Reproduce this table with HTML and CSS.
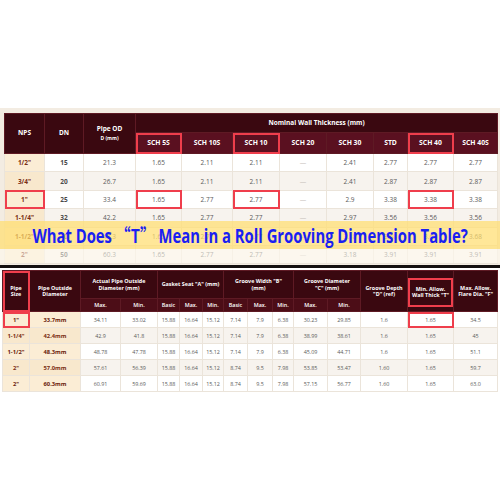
FILE: index.html
```html
<!DOCTYPE html>
<html lang="en">
<head>
  <meta charset="UTF-8">
  <meta name="viewport" content="width=device-width, initial-scale=1.0">
  <title>Roll Grooving Dimension Table</title>
  <link rel="stylesheet" href="styles.css">
</head>
<body>
  <div class="page">
    <section class="sheet-top">
      <table class="wall-table">
        <colgroup>
          <col style="width:40px"><col style="width:39px"><col style="width:52px"><col style="width:46px">
          <col style="width:51px"><col style="width:47px"><col style="width:47px"><col style="width:47px">
          <col style="width:34px"><col style="width:46px"><col style="width:44px">
        </colgroup>
        <thead>
          <tr class="head-main">
            <th rowspan="2">NPS</th>
            <th rowspan="2">DN</th>
            <th rowspan="2">Pipe OD<span class="unit">D (mm)</span></th>
            <th colspan="8">Nominal Wall Thickness (mm)</th>
          </tr>
          <tr class="head-sub">
            <th class="mark">SCH 5S</th>
            <th>SCH 10S</th>
            <th class="mark">SCH 10</th>
            <th>SCH 20</th>
            <th>SCH 30</th>
            <th>STD</th>
            <th class="mark">SCH 40</th>
            <th>SCH 40S</th>
          </tr>
        </thead>
        <tbody>
          <tr><td class="nps">1/2"</td><td class="dn">15</td><td>21.3</td><td>1.65</td><td>2.11</td><td>2.11</td><td class="dash">—</td><td>2.41</td><td>2.77</td><td>2.77</td><td>2.77</td></tr>
          <tr><td class="nps">3/4"</td><td class="dn">20</td><td>26.7</td><td>1.65</td><td>2.11</td><td>2.11</td><td class="dash">—</td><td>2.41</td><td>2.87</td><td>2.87</td><td>2.87</td></tr>
          <tr><td class="nps mark">1"</td><td class="dn">25</td><td>33.4</td><td class="mark">1.65</td><td>2.77</td><td class="mark">2.77</td><td class="dash">—</td><td>2.9</td><td>3.38</td><td class="mark">3.38</td><td>3.38</td></tr>
          <tr><td class="nps">1-1/4"</td><td class="dn">32</td><td>42.2</td><td>1.65</td><td>2.77</td><td>2.77</td><td class="dash">—</td><td>2.97</td><td>3.56</td><td>3.56</td><td>3.56</td></tr>
          <tr><td class="nps">1-1/2"</td><td class="dn">40</td><td>48.3</td><td>1.65</td><td>2.77</td><td>2.77</td><td class="dash">—</td><td>3.18</td><td>3.68</td><td>3.68</td><td>3.68</td></tr>
          <tr><td class="nps">2"</td><td class="dn">50</td><td>60.3</td><td>1.65</td><td>2.77</td><td>2.77</td><td class="dash">—</td><td>3.18</td><td>3.91</td><td>3.91</td><td>3.91</td></tr>
        </tbody>
      </table>
    </section>

    <div class="rule"></div>

    <section class="sheet-bottom">
      <table class="groove-table">
        <colgroup>
          <col style="width:27px"><col style="width:51px"><col style="width:40px"><col style="width:37px">
          <col style="width:22px"><col style="width:23px"><col style="width:21px"><col style="width:24px">
          <col style="width:25px"><col style="width:21px"><col style="width:34px"><col style="width:33px">
          <col style="width:47px"><col style="width:46px"><col style="width:44px">
        </colgroup>
        <thead>
          <tr class="head-main">
            <th rowspan="2" class="mark">Pipe<br>Size</th>
            <th rowspan="2">Pipe Outside<br>Diameter</th>
            <th colspan="2">Actual Pipe Outside<br>Diameter (mm)</th>
            <th colspan="3">Gasket Seat "A" (mm)</th>
            <th colspan="3">Groove Width "B"<br>(mm)</th>
            <th colspan="2">Groove Diameter<br>"C" (mm)</th>
            <th rowspan="2">Groove Depth<br>"D" (ref)</th>
            <th rowspan="2" class="tall"><span class="mark-box">Min. Allow.<br>Wall Thick "T"</span></th>
            <th rowspan="2">Max. Allow.<br>Flare Dia. "F"</th>
          </tr>
          <tr class="head-sub">
            <th>Max.</th><th>Min.</th>
            <th>Basic</th><th>Max.</th><th>Min.</th>
            <th>Basic</th><th>Max.</th><th>Min.</th>
            <th>Max.</th><th>Min.</th>
          </tr>
        </thead>
        <tbody>
          <tr><td class="nps mark">1"</td><td class="nps">33.7mm</td><td>34.11</td><td>33.02</td><td>15.88</td><td>16.64</td><td>15.12</td><td>7.14</td><td>7.9</td><td>6.38</td><td>30.23</td><td>29.85</td><td>1.6</td><td class="mark">1.65</td><td>34.5</td></tr>
          <tr><td class="nps">1-1/4"</td><td class="nps">42.4mm</td><td>42.9</td><td>41.8</td><td>15.88</td><td>16.64</td><td>15.12</td><td>7.14</td><td>7.9</td><td>6.38</td><td>38.99</td><td>38.61</td><td>1.6</td><td>1.65</td><td>45</td></tr>
          <tr><td class="nps">1-1/2"</td><td class="nps">48.3mm</td><td>48.78</td><td>47.78</td><td>15.88</td><td>16.64</td><td>15.12</td><td>7.14</td><td>7.9</td><td>6.38</td><td>45.09</td><td>44.71</td><td>1.6</td><td>1.65</td><td>51.1</td></tr>
          <tr><td class="nps">2"</td><td class="nps">57.0mm</td><td>57.61</td><td>56.39</td><td>15.88</td><td>16.64</td><td>15.12</td><td>8.74</td><td>9.5</td><td>7.98</td><td>53.85</td><td>53.47</td><td>1.60</td><td>1.65</td><td>59.7</td></tr>
          <tr><td class="nps">2"</td><td class="nps">60.3mm</td><td>60.91</td><td>59.69</td><td>15.88</td><td>16.64</td><td>15.12</td><td>8.74</td><td>9.5</td><td>7.98</td><td>57.15</td><td>56.77</td><td>1.60</td><td>1.65</td><td>63.0</td></tr>
        </tbody>
      </table>
    </section>

    <!-- title banner laid over the first table -->
    <div class="banner">
      <h1 class="banner-title">What Does <span class="cjk-quote">“T”</span> Mean in a Roll Grooving Dimension Table?</h1>
    </div>
    <div class="banner-fade"></div>
  </div>
</body>
</html>
```

FILE: styles.css
```css
:root {
  --head-dark: #3a0810;
  --head-sub: #5a1020;
  --head-line: #5e1a24;
  --cell-line: #ebe4da;
  --cell-text: #5a5a5a;
  --row-alt: #f7f3ee;
  --cream: #fbedd5;
  --cream-alt: #f8e8cd;
  --nps-text: #7a2e14;
  --mark: #ef3e4c;
  --frame: #f3ece2;
}

body {
  margin: 0;
  background: #ffffff;
  font-family: 'Open Sans', 'Noto Sans', Arial, sans-serif;
  color: var(--cell-text);
}

.page {
  position: relative;
  width: 500px;
  height: 500px;
  overflow: hidden;
  padding-top: 108px;
  box-sizing: border-box;
}

/* Frames */
.sheet-top {
  background: var(--frame);
  padding: 5px 3px 1px 4px;
}

.rule {
  height: 3px;
  background: #141010;
}

.sheet-bottom {
  padding: 2px 3px 0 2px;
}

/* Tables */
table {
  border-collapse: collapse;
  table-layout: fixed;
  text-align: center;
}

th {
  color: #ffffff;
  font-weight: 700;
  padding: 0;
  border: 1px solid var(--head-line);
  background: var(--head-dark);
  line-height: 1.25;
}

td {
  padding: 0;
  border: 1px solid var(--cell-line);
  background: #ffffff;
}

tbody tr:nth-child(even) td {
  background: var(--row-alt);
}

td.nps,
tbody tr:nth-child(even) td.nps {
  color: var(--nps-text);
  font-weight: 700;
}

td.nps {
  background: var(--cream);
}

tbody tr:nth-child(even) td.nps {
  background: var(--cream-alt);
}

td.dash {
  color: #c8c2ba;
}

.mark {
  outline: 2px solid var(--mark);
  outline-offset: -2px;
}

/* Wall thickness table */
.wall-table {
  width: 493px;
  font-size: 6.5px;
}

.wall-table .head-main th {
  height: 18px;
}

.wall-table .head-sub th {
  height: 20px;
  background: var(--head-sub);
  font-size: 6.8px;
}

.wall-table td {
  height: 17.4px;
}

.wall-table td.dn {
  color: #4a4a4a;
  font-weight: 700;
}

.unit {
  display: block;
  font-size: 5px;
  margin-top: 2px;
}

/* Groove dimension table */
.groove-table {
  width: 495px;
  font-size: 5.4px;
}

.groove-table .head-main th {
  height: 27px;
}

.groove-table .head-sub th {
  height: 12px;
  background: #4c0d17;
  font-weight: 600;
}

.groove-table td {
  height: 15px;
}

.groove-table th.tall {
  padding: 6px 0 4px;
}

.mark-box {
  display: flex;
  align-items: center;
  justify-content: center;
  height: 29px;
  border: 2px solid var(--mark);
  box-sizing: border-box;
}

.groove-table td.nps {
  color: #6a1c0c;
  font-size: 5.8px;
}

/* Banner */
.banner {
  position: absolute;
  left: 0;
  top: 221px;
  width: 500px;
  height: 28px;
  background: rgba(255, 222, 112, 0.72);
  display: flex;
  align-items: center;
  justify-content: center;
}

.banner-title {
  margin: 0;
  color: #1a1ff2;
  font-size: 19px;
  font-weight: 700;
  white-space: nowrap;
  transform: scaleX(0.78);
}

.cjk-quote {
  font-family: 'Noto Sans CJK SC', sans-serif;
}

.banner-fade {
  position: absolute;
  left: 0;
  top: 249px;
  width: 500px;
  height: 14px;
  background: rgba(255, 250, 238, 0.6);
}
```
